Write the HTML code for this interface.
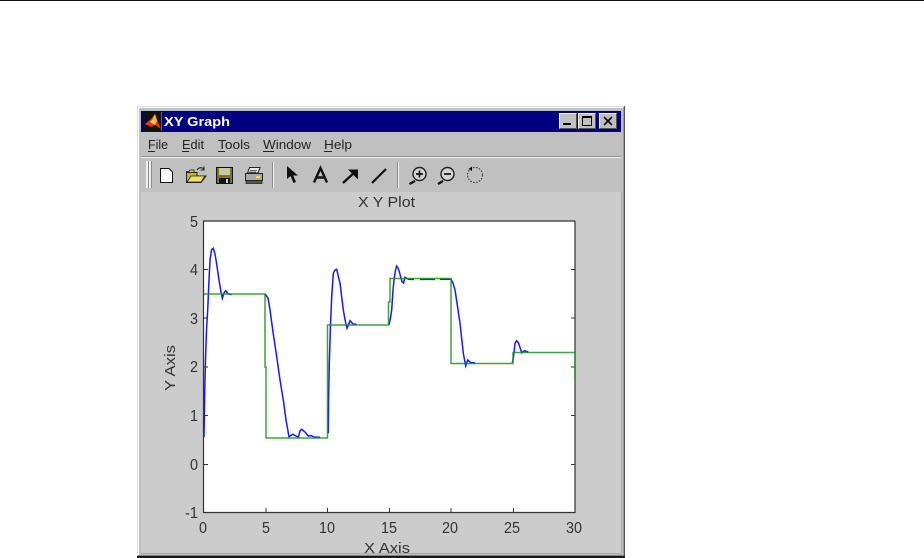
<!DOCTYPE html>
<html><head><meta charset="utf-8"><style>
html,body{margin:0;padding:0;background:#fff;width:924px;height:558px;overflow:hidden}
svg{display:block;filter:blur(0.35px)}
text{font-family:"Liberation Sans",sans-serif}
</style></head><body>
<svg width="924" height="558" viewBox="0 0 924 558" xmlns="http://www.w3.org/2000/svg">
<rect x="0" y="0" width="924" height="1" fill="#111"/>
<!-- window frame -->
<rect x="137" y="106" width="488" height="452" fill="#c0c0c0"/>
<rect x="137" y="106" width="488" height="1" fill="#dfdfdf"/>
<rect x="137" y="106" width="1" height="450" fill="#dfdfdf"/>
<rect x="138" y="107" width="486" height="1" fill="#fff"/>
<rect x="138" y="107" width="1" height="448" fill="#fff"/>
<rect x="624" y="106" width="1" height="452" fill="#555"/>
<rect x="623" y="107" width="1" height="448" fill="#999"/>
<rect x="137" y="556" width="488" height="2" fill="#1a1a1a"/>
<rect x="138" y="555" width="486" height="1" fill="#808080"/>
<!-- title bar -->
<rect x="141" y="111" width="480" height="21" fill="#000080"/>
<!-- logo -->
<rect x="143" y="112" width="19" height="19" fill="#111"/>
<rect x="161" y="112" width="1" height="19" fill="#666"/>
<path d="M145 124 L151 119 L155 114 L158 122 L161 129 L155 125 L151 127 Z" fill="#e8301a"/>
<path d="M153 118 L155 114 L157 121 L155 125 L152 123 Z" fill="#f8c030"/>
<path d="M150 122 L153 119 L154 124 Z" fill="#ffe070"/>
<text x="164" y="126" font-size="13" font-weight="bold" fill="#fff" textLength="66" lengthAdjust="spacingAndGlyphs">XY Graph</text>
<!-- window buttons -->
<g>
<rect x="559" y="113" width="18" height="16" fill="#c0c0c0"/>
<path d="M559.500 128V113.500H576" fill="none" stroke="#fff"/>
<path d="M559.500 128.500H576.500V113.500" fill="none" stroke="#555"/>
<rect x="563" y="123" width="8" height="2" fill="#000"/>
<rect x="578" y="113" width="18" height="16" fill="#c0c0c0"/>
<path d="M578.500 128V113.500H595" fill="none" stroke="#fff"/>
<path d="M578.500 128.500H595.500V113.500" fill="none" stroke="#555"/>
<rect x="582.500" y="116.500" width="9" height="9" fill="none" stroke="#000"/>
<rect x="582" y="116" width="10" height="2" fill="#000"/>
<rect x="599" y="113" width="18" height="16" fill="#c0c0c0"/>
<path d="M599.500 128V113.500H616" fill="none" stroke="#fff"/>
<path d="M599.500 128.500H616.500V113.500" fill="none" stroke="#555"/>
<path d="M604 117L612 125M612 117L604 125" stroke="#000" stroke-width="1.600"/>
</g>
<!-- menu -->
<g font-size="13" fill="#222">
<text x="148" y="149" textLength="20" lengthAdjust="spacingAndGlyphs">File</text>
<text x="182" y="149" textLength="22" lengthAdjust="spacingAndGlyphs">Edit</text>
<text x="218" y="149" textLength="32" lengthAdjust="spacingAndGlyphs">Tools</text>
<text x="263" y="149" textLength="48" lengthAdjust="spacingAndGlyphs">Window</text>
<text x="324" y="149" textLength="28" lengthAdjust="spacingAndGlyphs">Help</text>
</g>
<g fill="#222">
<rect x="148" y="151" width="7" height="1"/>
<rect x="182" y="151" width="7" height="1"/>
<rect x="218" y="151" width="7" height="1"/>
<rect x="263" y="151" width="11" height="1"/>
<rect x="324" y="151" width="8" height="1"/>
</g>
<rect x="141" y="156" width="480" height="1" fill="#8c8c8c"/>
<rect x="141" y="157" width="480" height="1" fill="#f2f2f2"/>
<!-- toolbar -->
<rect x="146" y="161" width="2" height="27" fill="#f0f0f0"/>
<rect x="148" y="161" width="1" height="27" fill="#8a8a8a"/>
<rect x="149" y="161" width="2" height="27" fill="#f0f0f0"/>
<rect x="151" y="161" width="1" height="27" fill="#8a8a8a"/>
<rect x="272" y="162" width="1" height="26" fill="#8a8a8a"/>
<rect x="273" y="162" width="1" height="26" fill="#f4f4f4"/>
<rect x="397" y="162" width="1" height="26" fill="#8a8a8a"/>
<rect x="398" y="162" width="1" height="26" fill="#f4f4f4"/>
<!-- new -->
<path d="M160.500 168.500H169L172.500 172V182.500H160.500Z" fill="#fff" stroke="#111"/>
<!-- open -->
<path d="M186.500 171.500H189L190 170H194V173H186.500Z" fill="#e8d850" stroke="#111" stroke-width=".8"/>
<path d="M186.500 182.500V172.500H197V176H206L201 182.500Z" fill="#c8b830" stroke="#222"/>
<path d="M187 182L191 176H205L201 182Z" fill="#f0e070" stroke="#222" stroke-width=".8"/>
<path d="M197 170Q200 166 204 169M204 166.500V170H200.500" fill="none" stroke="#222" stroke-width="1.100"/>
<!-- save -->
<rect x="216.500" y="167.500" width="16" height="16" fill="#77771c" stroke="#111"/>
<rect x="219" y="168" width="11" height="7" fill="#c8c8a8"/>
<rect x="219" y="178" width="11" height="6" fill="#111"/>
<rect x="226" y="179" width="2" height="4" fill="#ccc"/>
<!-- print -->
<path d="M249.500 167.500H260L258 173H247.500Z" fill="#e8e8e8" stroke="#222"/>
<path d="M245.500 173.500H262.500V180.500H245.500Z" fill="#aaa" stroke="#222"/>
<path d="M246 180.500H262V183.500H246Z" fill="#555" stroke="#222" stroke-width=".8"/>
<rect x="256" y="176" width="4" height="2" fill="#e8e040"/>
<path d="M250 170.500H257M249 172H256" stroke="#444" stroke-width=".8"/>
<!-- pointer -->
<path d="M287 166V179L290.500 176L293.500 183L296 182L293.200 175.500H298Z" fill="#111"/>
<!-- A -->
<path d="M314 182.500L320.500 168L327 182.500M316.500 177.500H324.500" fill="none" stroke="#111" stroke-width="2.400"/>
<!-- arrow -->
<path d="M343 183L356 171" stroke="#111" stroke-width="2.400" fill="none"/>
<path d="M348 169.500H358V179.500Z" fill="#111"/>
<!-- line -->
<path d="M372 183L386 169" stroke="#111" stroke-width="2.200" fill="none"/>
<!-- zoom in -->
<circle cx="419.500" cy="174" r="6.500" fill="#d4d4d4" stroke="#222" stroke-width="1.400"/>
<path d="M415 181L409.500 184" stroke="#111" stroke-width="2.200"/>
<path d="M416 174H423M419.500 170.500V177.500" stroke="#111" stroke-width="1.700"/>
<!-- zoom out -->
<circle cx="447.500" cy="174" r="6.500" fill="#d4d4d4" stroke="#222" stroke-width="1.400"/>
<path d="M443 181L438 184" stroke="#111" stroke-width="2.200"/>
<path d="M444 174H451" stroke="#111" stroke-width="1.700"/>
<!-- rotate -->
<circle cx="475" cy="175" r="7.500" fill="none" stroke="#333" stroke-width="1" stroke-dasharray="1.600 1.400"/>
<path d="M472 166.500V171L468.500 169Z" fill="#111"/>
<!-- figure -->
<rect x="141" y="192" width="480" height="362" fill="#cccccc"/>
<rect x="621" y="192" width="1" height="362" fill="#aaa"/>
<rect x="141" y="553" width="481" height="1" fill="#aaa"/>
<text x="358" y="207" font-size="15" fill="#333" textLength="57" lengthAdjust="spacingAndGlyphs">X Y Plot</text>
<!-- axes -->
<rect x="203.500" y="221.500" width="371.500" height="290.500" fill="#fff"/>
<path d="M575 221V512.500H203.500V221H575" fill="none" stroke="#333" stroke-width="1.200"/>
<g stroke="#333" stroke-width="1">
<path d="M204 269.500H208M204 318H208M204 367H208M204 415.500H208M204 464.500H208"/>
<path d="M571 269.500H575M571 318H575M571 367H575M571 415.500H575M571 464.500H575"/>
<path d="M266 508V512M327.500 508V512M389.500 508V512M451 508V512M513.500 508V512"/>
</g>
<g font-size="16" fill="#333">
<text x="190" y="227" textLength="8" lengthAdjust="spacingAndGlyphs">5</text>
<text x="190" y="275" textLength="8" lengthAdjust="spacingAndGlyphs">4</text>
<text x="190" y="324" textLength="8" lengthAdjust="spacingAndGlyphs">3</text>
<text x="190" y="372" textLength="8" lengthAdjust="spacingAndGlyphs">2</text>
<text x="190" y="421" textLength="8" lengthAdjust="spacingAndGlyphs">1</text>
<text x="190" y="470" textLength="8" lengthAdjust="spacingAndGlyphs">0</text>
<text x="185" y="518" textLength="13" lengthAdjust="spacingAndGlyphs">-1</text>
</g>
<g font-size="16" fill="#333">
<text x="199" y="533" textLength="8" lengthAdjust="spacingAndGlyphs">0</text>
<text x="262" y="533" textLength="8" lengthAdjust="spacingAndGlyphs">5</text>
<text x="319" y="533" textLength="16" lengthAdjust="spacingAndGlyphs">10</text>
<text x="381" y="533" textLength="16" lengthAdjust="spacingAndGlyphs">15</text>
<text x="442" y="533" textLength="16" lengthAdjust="spacingAndGlyphs">20</text>
<text x="504" y="533" textLength="16" lengthAdjust="spacingAndGlyphs">25</text>
<text x="566" y="533" textLength="16" lengthAdjust="spacingAndGlyphs">30</text>
</g>
<text x="364" y="553" font-size="15" fill="#333" textLength="46" lengthAdjust="spacingAndGlyphs">X Axis</text>
<text transform="translate(175,391) rotate(-90)" font-size="15" fill="#333" textLength="46" lengthAdjust="spacingAndGlyphs">Y Axis</text>
<!-- blue -->
<g fill="none" stroke="#1a1af0" stroke-width="1.500">
<path d="M204 437L204.700 393L205.500 360L206.500 330L207.700 310L209 280L210 260L211.500 250L213.300 248.300L215 254L216.500 263L219 280L221 292L222.300 298.300L224 293L225.700 290.700L228.300 294L231.700 294.700"/>
<path d="M265 294L268 298L270 310L273 332L276.700 356.700L280 380L283.300 400L286 420L289 436.700L292.700 434.300L295 435.500L298.300 437.300L300 431L301.700 429.300L305 432L308.300 436L311 435.500L314 437L320 437.300"/>
<path d="M328.300 433.300L328.600 400L329.300 363.300L330.500 325L331.700 296.700L333.300 273.300L335 270L336.700 269.300L338 275L340 283.300L343.300 310L345.500 322L347 328.300L350 320.700L353.300 324.300L356.700 324.300"/>
<path d="M389 325L390.500 318L391.700 310L393 290L394 280L395.500 270L396.700 266L398 268L399.300 271.700L402 281.700L403.500 283L405 277.300L408.300 279.300L414 279.500M420 279.500L428 279.300L435 279.500M440 279.300L451 279.300L453 283L455 290L457 303L460 323.300L463.300 353.300L465.700 366L467.700 360L470.700 362.700L475 362.700"/>
<path d="M512.300 362.700L513.500 357L515 343.300L516.700 340.700L518.500 343L521.700 352.700L524.300 350.700L528.300 352"/>
</g>
<!-- green -->
<path d="M204 294H265V367H266V438H327.500V325H388.500V302H390V278.500H451V363.500H513V352.500H575V381" fill="none" stroke="#1f8f1f" stroke-width="1.500" opacity=".85"/>
</svg>
</body></html>
